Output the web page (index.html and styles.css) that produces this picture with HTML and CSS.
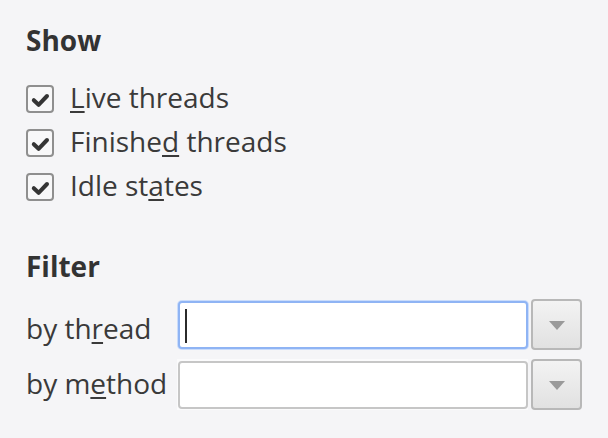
FILE: index.html
```html
<!DOCTYPE html>
<html>
<head>
<meta charset="utf-8">
<link rel="stylesheet" href="styles.css">
</head>
<body>
<div class="panel">
  <h2 class="heading">Show</h2>
  <div class="checks">
    <label class="check"><span class="box"><svg viewBox="0 0 28 28" width="28" height="28"><path d="M7.8 15.2 L12.6 19.8 L21 11" fill="none" stroke="#353535" stroke-width="4" stroke-linecap="round" stroke-linejoin="round"/></svg></span><span class="text"><u>L</u>ive threads</span></label>
    <label class="check"><span class="box"><svg viewBox="0 0 28 28" width="28" height="28"><path d="M7.8 15.2 L12.6 19.8 L21 11" fill="none" stroke="#353535" stroke-width="4" stroke-linecap="round" stroke-linejoin="round"/></svg></span><span class="text">Finishe<u>d</u> threads</span></label>
    <label class="check"><span class="box"><svg viewBox="0 0 28 28" width="28" height="28"><path d="M7.8 15.2 L12.6 19.8 L21 11" fill="none" stroke="#353535" stroke-width="4" stroke-linecap="round" stroke-linejoin="round"/></svg></span><span class="text">Idle st<u>a</u>tes</span></label>
  </div>
  <h2 class="heading filter-heading">Filter</h2>
  <div class="filters">
    <div class="flabel flabel-1">by th<u>r</u>ead</div>
    <div class="field-wrap"><div class="field focused"><span class="caret"></span></div></div>
    <div class="dd"><svg width="16" height="9" viewBox="0 0 16 9"><path d="M0 0 H16 L8 9 Z" fill="#9a9a9a"/></svg></div>
    <div class="flabel flabel-2">by m<u>e</u>thod</div>
    <div class="field-wrap alt"><div class="field"></div></div>
    <div class="dd"><svg width="16" height="9" viewBox="0 0 16 9"><path d="M0 0 H16 L8 9 Z" fill="#9a9a9a"/></svg></div>
  </div>
</div>
</body>
</html>
```

FILE: styles.css
```css
html, body {
  margin: 0;
  padding: 0;
  background: #f5f5f7;
}
body {
  width: 608px;
  height: 438px;
  overflow: hidden;
  font-family: "Open Sans", "DejaVu Sans", sans-serif;
  color: #3a3a3a;
}
.panel {
  padding: 20px 0 0 26px;
}
.heading {
  margin: 0;
  font-size: 28px;
  line-height: 40px;
  font-weight: 700;
  color: #333;
}
.checks {
  margin-top: 15px;
  display: flex;
  flex-direction: column;
}
.check {
  display: flex;
  align-items: center;
  height: 44px;
  font-size: 28px;
}
.box {
  box-sizing: border-box;
  width: 28px;
  height: 28px;
  border: 2px solid #8f8f8f;
  border-radius: 4px;
  background: #f8f8f9;
  position: relative;
  margin-top: 4px;
  flex: none;
}
.box svg {
  position: absolute;
  left: -2px;
  top: -2px;
}
.text {
  margin-left: 16px;
  line-height: 44px;
}
u {
  text-decoration-thickness: 2px;
  text-underline-offset: 3px;
}
.filter-heading {
  margin-top: 39px;
}
.filters {
  margin-top: 13px;
  display: grid;
  grid-template-columns: 149px 350px 51px;
  column-gap: 3px;
  row-gap: 9px;
  font-size: 28px;
}
.flabel {
  line-height: 38px;
  align-self: start;
}
.flabel-1 { padding-top: 10px; }
.flabel-2 { padding-top: 5px; }
.field-wrap {
  display: flex;
  align-items: center;
  height: 51px;
  margin-left: -1px;
  padding-left: 1px;
}
.field-wrap.alt {
  background: #fbfbfc;
}
.field {
  box-sizing: border-box;
  width: 350px;
  height: 48px;
  background: #fff;
  border: 2px solid #c6c6c6;
  border-radius: 4px;
  position: relative;
}
.field.focused {
  border-color: #8fb4f4;
  box-shadow: 0 0 0 1px #cadcfb;
}
.caret {
  position: absolute;
  left: 5px;
  top: 6px;
  width: 2px;
  height: 34px;
  background: #2b2b2b;
}
.dd {
  box-sizing: border-box;
  width: 51px;
  height: 51px;
  border: 2px solid #b8b8b8;
  border-radius: 4px;
  background: linear-gradient(#f3f3f3, #e1e1e1);
  display: flex;
  align-items: center;
  justify-content: center;
}
.dd svg {
  margin-top: 1px;
}
```
